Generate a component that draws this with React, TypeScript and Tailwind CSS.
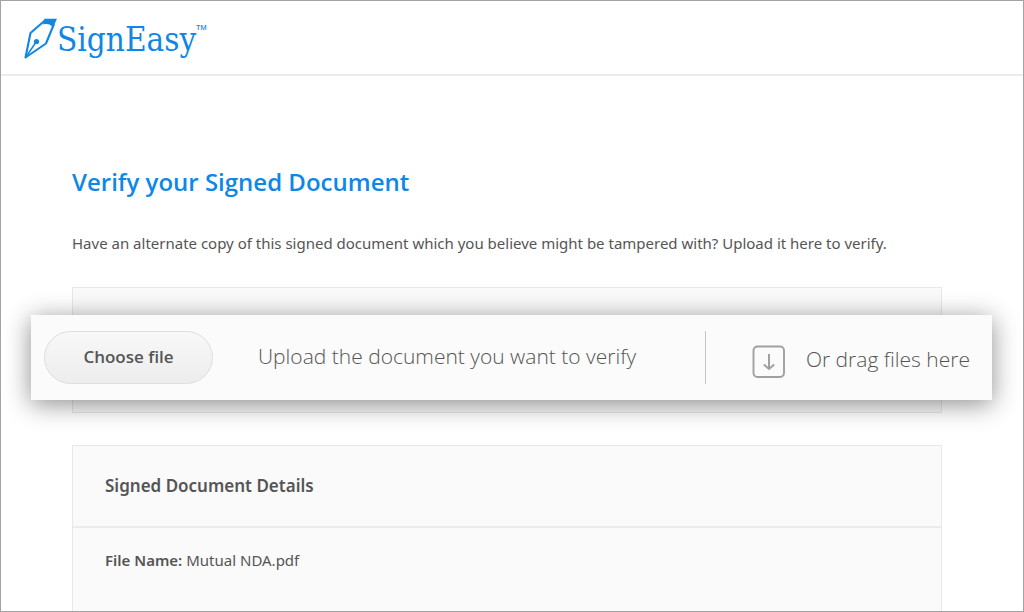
function Logo() {
  return (
    <a href="#" aria-label="SignEasy" className="flex items-start text-[#0f87e6]">
      <svg viewBox="0 0 34 42" className="h-[42px] w-[34px]" fill="none" aria-hidden="true">
        <path
          d="M22.500 2 L7.500 15 L2.500 39.500 L23 25.500 L31 6"
          stroke="currentColor"
          strokeWidth="2.100"
          strokeLinejoin="round"
        />
        <path d="M21.500 0.800 H34 L30 9.500 C27.500 6.300 24.500 5.500 20 6.500 Z" fill="currentColor" />
        <path d="M2.500 39.500 L13.500 23.500" stroke="currentColor" strokeWidth="1.500" />
        <circle cx="13.500" cy="23.500" r="2.600" fill="currentColor" />
      </svg>
      <span className="font-['DejaVu_Serif_Condensed','DejaVu_Serif',serif] text-[33px] leading-[44px]">
        SignEasy
      </span>
      <span className="pt-1 font-['Open_Sans',sans-serif] text-[7px] leading-[12px] font-semibold">TM</span>
    </a>
  );
}

function DropIcon() {
  return (
    <svg viewBox="0 0 34 34" className="h-[34px] w-[34px] text-[#a0a0a0]" fill="none" stroke="currentColor" aria-hidden="true">
      <rect x="1.500" y="1.500" width="30.500" height="30.500" rx="4" strokeWidth="1.900" />
      <path d="M17 9 V24.500 M11.800 19.500 L17 24 L22.200 19.500" strokeWidth="2" />
    </svg>
  );
}

export default function App() {
  return (
    <div className="flex min-h-screen flex-col border border-[#a3a3a3] bg-white font-['Open_Sans',sans-serif] text-[#555]">
      <header className="border-b-2 border-[#ececec] px-[22px] pt-[17px] pb-3">
        <Logo />
      </header>

      <main className="flex flex-1 flex-col pt-[90px] pr-[81px] pl-[71px]">
        <h1 className="text-2xl font-semibold text-[#0f87e6]">Verify your Signed Document</h1>
        <p className="mt-[33px] font-['Noto_Sans',sans-serif] text-[15px] leading-6">
          Have an alternate copy of this signed document which you believe might be tampered with? Upload it here to verify.
        </p>

        <section className="mt-8 border border-[#e8e8e8] bg-[#fafafa] pt-[27px] pb-3">
          <div className="-mr-[51px] -ml-[42px] flex items-center bg-[#fbfbfb] py-4 pr-[22px] pl-[13px] shadow-[0_4px_24px_0_rgba(0,0,0,0.45)]">
            <button
              type="button"
              className="h-[53px] w-[169px] shrink-0 rounded-full border border-[#dedede] bg-linear-to-b from-[#f8f8f8] to-[#ededed] pb-0.5 text-[17px] font-semibold"
            >
              Choose file
            </button>
            <p className="ml-[45px] flex-1 pb-1 text-[21px] leading-[46px] font-light">
              Upload the document you want to verify
            </p>
            <div className="flex h-[53px] items-center border-l border-[#c4c4c4] pt-2 pl-[46px]">
              <DropIcon />
              <span className="ml-5 pb-1 text-[21px] font-light">Or drag files here</span>
            </div>
          </div>
        </section>

        <section className="mt-8 flex-1 border border-b-0 border-[#e8e8e8] bg-[#fafafa] font-['Noto_Sans',sans-serif]">
          <h2 className="border-b-2 border-[#ececec] px-8 py-[27px] text-[17px] leading-[26px] font-semibold">
            Signed Document Details
          </h2>
          <dl className="flex gap-1 px-8 pt-5 text-[15px] leading-6">
            <dt className="font-semibold">File Name:</dt>
            <dd>Mutual NDA.pdf</dd>
          </dl>
        </section>
      </main>
    </div>
  );
}
